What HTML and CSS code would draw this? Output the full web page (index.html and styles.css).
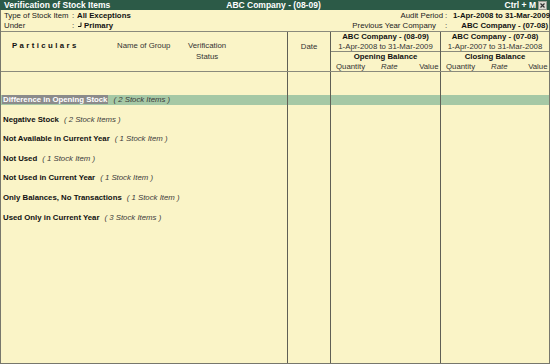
FILE: index.html
```html
<!DOCTYPE html>
<html>
<head>
<meta charset="utf-8">
<link rel="stylesheet" href="styles.css">
</head>
<body>
<div class="app">
  <div class="titlebar">
    <span class="t-left">Verification of Stock Items</span>
    <span class="t-center">ABC Company - (08-09)</span>
    <span class="t-right">Ctrl + M
      <svg class="close" width="9" height="9" viewBox="0 0 9 9"><rect x="0.5" y="0.5" width="8" height="8" fill="#dcdcd4" stroke="#9a9a92"/><path d="M2.5 2.5 L6.5 6.5 M6.5 2.5 L2.5 6.5" stroke="#333" stroke-width="1.2"/></svg>
    </span>
  </div>
  <div class="frame">
    <div class="info">
      <div class="info-left">
        <div class="irow"><span class="lbl">Type of Stock Item</span><span class="colon">:</span><b>All Exceptions</b></div>
        <div class="irow"><span class="lbl">Under</span><span class="colon">:</span><svg class="mark" width="6" height="6" viewBox="0 0 6 6"><path d="M1 4.5 H4 V0.5" fill="none" stroke="#111" stroke-width="1"/></svg><b>Primary</b></div>
      </div>
      <div class="info-right">
        <span class="rlbl">Audit Period</span><span class="colon">:</span><b class="rval">1-Apr-2008 to 31-Mar-2009</b>
        <span class="rlbl wide">Previous Year Company</span><span class="colon">:</span><b class="rval">ABC Company - (07-08)</b>
      </div>
    </div>
    <div class="head">
      <div class="hpart">
        <span class="particulars">Particulars</span>
        <span class="hlabel">Name of Group</span>
        <span class="hlabel center">Verification</span>
        <span></span><span></span>
        <span class="hlabel center">Status</span>
      </div>
      <div class="hdate">Date</div>
      <div class="hgroup">
        <div class="g-top">
          <div class="g-line strong">ABC Company - (08-09)</div>
          <div class="g-line">1-Apr-2008 to 31-Mar-2009</div>
        </div>
        <div class="g-bottom">
          <div class="g-line strong">Opening Balance</div>
          <div class="g-cols"><span>Quantity</span><span class="it">Rate</span><span>Value</span></div>
        </div>
      </div>
      <div class="hgroup">
        <div class="g-top">
          <div class="g-line strong">ABC Company - (07-08)</div>
          <div class="g-line">1-Apr-2007 to 31-Mar-2008</div>
        </div>
        <div class="g-bottom">
          <div class="g-line strong">Closing Balance</div>
          <div class="g-cols"><span>Quantity</span><span class="it">Rate</span><span>Value</span></div>
        </div>
      </div>
    </div>
    <div class="body">
      <div class="row spacer"><div></div><div></div><div></div><div></div></div>
      <div class="row sel"><div class="p"><b class="name">Difference in Opening Stock</b><span class="note">( 2 Stock Items )</span></div><div></div><div></div><div></div></div>
      <div class="row"><div class="p"><b class="name">Negative Stock</b><span class="note">( 2 Stock Items )</span></div><div></div><div></div><div></div></div>
      <div class="row"><div class="p"><b class="name">Not Available in Current Year</b><span class="note">( 1 Stock Item )</span></div><div></div><div></div><div></div></div>
      <div class="row"><div class="p"><b class="name">Not Used</b><span class="note">( 1 Stock Item )</span></div><div></div><div></div><div></div></div>
      <div class="row"><div class="p"><b class="name">Not Used in Current Year</b><span class="note">( 1 Stock Item )</span></div><div></div><div></div><div></div></div>
      <div class="row"><div class="p"><b class="name">Only Balances, No Transactions</b><span class="note">( 1 Stock Item )</span></div><div></div><div></div><div></div></div>
      <div class="row"><div class="p"><b class="name">Used Only in Current Year</b><span class="note">( 3 Stock Items )</span></div><div></div><div></div><div></div></div>
      <div class="row fill"><div></div><div></div><div></div><div></div></div>
    </div>
  </div>
</div>
</body>
</html>
```

FILE: styles.css
```css
* { box-sizing: border-box; margin: 0; padding: 0; }
html, body { width: 550px; height: 364px; overflow: hidden; }
body {
  font-family: "Liberation Sans", Arial, sans-serif;
  font-size: 7.8px;
  color: #1a1a1a;
  background: #faf4c7;
}
b { font-weight: bold; color: #111; }
.app { width: 550px; height: 364px; display: flex; flex-direction: column; }

.titlebar {
  height: 10px;
  flex: none;
  background: #2c5a47;
  color: #fff;
  font-weight: bold;
  font-size: 8.5px;
  line-height: 10px;
  display: grid;
  grid-template-columns: 1fr auto 1fr;
  padding: 0 3px 0 4px;
  white-space: nowrap;
}
.t-center { padding-right: 4px; }
.t-right { justify-self: end; display: flex; align-items: center; gap: 2px; }
.close { display: block; }

.frame {
  flex: 1;
  display: flex;
  flex-direction: column;
  border: 1px solid #77776c;
  border-top: 0;
  min-height: 0;
}

.info {
  height: 22px;
  flex: none;
  padding-top: 1px;
  border-bottom: 1px solid #8a8a7c;
  display: flex;
  justify-content: space-between;
  line-height: 10px;
  white-space: nowrap;
}
.info-left { padding-left: 3px; }
.irow { display: flex; height: 10px; align-items: center; }
.lbl { width: 68px; color: #222; }
.colon { width: 5px; color: #222; }
.mark { margin: -3px 1px 0 0; }
.info-right {
  display: grid;
  grid-template-columns: auto 8px 95px;
  grid-auto-rows: 10px;
  padding-right: 1px;
}
.rlbl { text-align: right; padding-right: 2px; color: #222; }
.rlbl.wide { padding-right: 9px; }
.rval { text-align: right; }

.head {
  height: 40px;
  flex: none;
  border-bottom: 1px solid #8a8a7c;
  display: grid;
  grid-template-columns: 286px 43px 110px 1fr;
  white-space: nowrap;
}
.head > div:not(:first-child), .row > div:not(:first-child) {
  border-left: 1px solid #5f5f55;
}
.hpart {
  display: grid;
  grid-template-columns: 105px 71px max-content;
  justify-content: start;
  grid-auto-rows: 10.5px;
  line-height: 10.5px;
  padding: 9px 0 0 11px;
  align-content: start;
}
.particulars { font-weight: bold; letter-spacing: 2.4px; color: #111; }
.hlabel { color: #333; }
.center { text-align: center; }
.hdate { text-align: center; padding-top: 10px; line-height: 10px; color: #333; }

.hgroup { display: flex; flex-direction: column; }
.g-top { height: 20px; border-bottom: 1px solid #8a8a7c; }
.g-bottom { height: 19px; }
.g-line { height: 9.5px; line-height: 9.5px; text-align: center; color: #333; }
.g-line.strong { color: #111; font-weight: bold; }
.g-cols {
  display: grid;
  grid-template-columns: 45px 1fr auto;
  height: 9.5px;
  line-height: 9.5px;
  padding: 0 1.5px 0 5px;
  color: #333;
}
.it { font-style: italic; }

.body { flex: 1; display: flex; flex-direction: column; min-height: 0; }
.row {
  display: grid;
  grid-template-columns: 286px 43px 110px 1fr;
  height: 19.6px;
  flex: none;
}
.row.spacer { height: 23px; }
.row.fill { flex: 1; height: auto; }
.row .p {
  padding-left: 2px;
  height: 10px;
  line-height: 10px;
  white-space: nowrap;
}
.row.sel { background: linear-gradient(#a5c8a5 0, #a5c8a5 10px, transparent 10px); }
.sel .name { background: #8b8b8b; color: #fff; padding: 0 1px; margin-left: -1px; }
.note { font-style: italic; color: #3a3a3a; margin-left: 5px; }
```
